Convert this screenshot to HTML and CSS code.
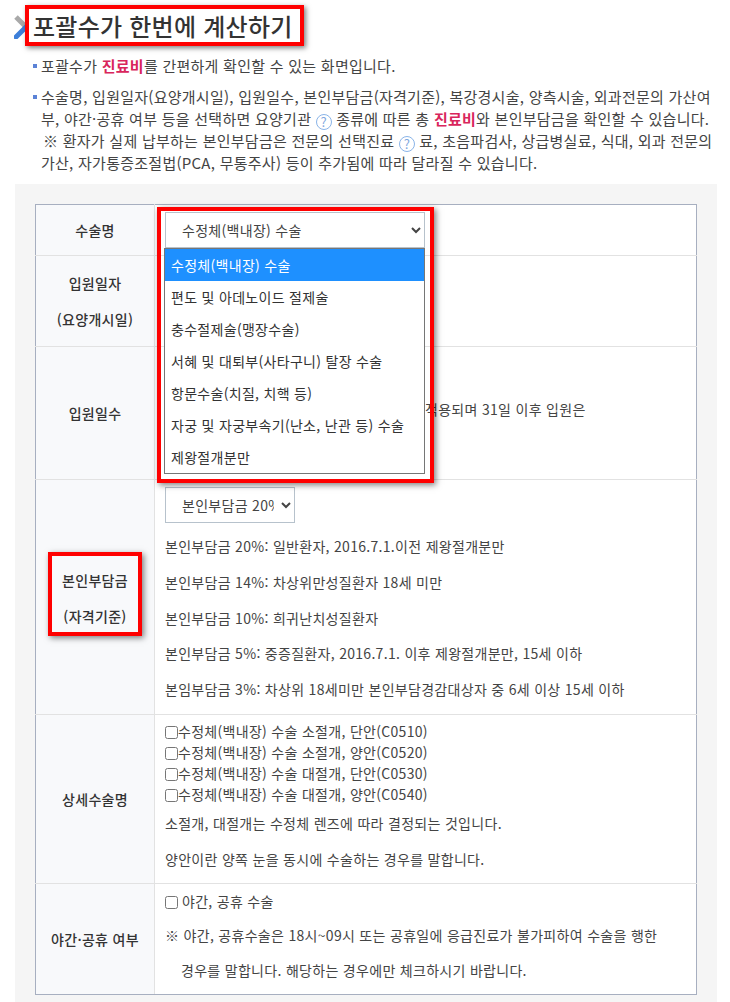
FILE: index.html
```html
<!DOCTYPE html>
<html lang="ko">
<head>
    <meta charset="utf-8">
    <title>포괄수가 한번에 계산하기</title>
    <link rel="stylesheet" href="styles.css">
</head>
<body>
    <div class="title-row">
        <svg class="title-icon" width="20" height="24" viewBox="0 0 20 24">
            <path d="M2 2 L12 12" stroke="#a9a9a9" stroke-width="5" fill="none"/>
            <path d="M12 12 L2 22" stroke="#3d7fd9" stroke-width="5" fill="none" stroke-linecap="round"/>
        </svg>
        <h1 class="title">포괄수가 한번에 계산하기</h1>
    </div>

    <ul class="intro">
        <li>포괄수가 <b class="hl">진료비</b>를 간편하게 확인할 수 있는 화면입니다.</li>
        <li>수술명, 입원일자(요양개시일), 입원일수, 본인부담금(자격기준), 복강경시술, 양측시술, 외과전문의 가산여<br>
            부, 야간·공휴 여부 등을 선택하면 요양기관 <span class="help">?</span> 종류에 따른 총 <b class="hl">진료비</b>와 본인부담금을 확인할 수 있습니다.<br>
            <span class="indent">※ 환자가 실제 납부하는 본인부담금은 전문의 선택진료 <span class="help">?</span> 료, 초음파검사, 상급병실료, 식대, 외과 전문의</span><br>
            가산, 자가통증조절법(PCA, 무통주사) 등이 추가됨에 따라 달라질 수 있습니다.</li>
    </ul>

    <div class="panel">
        <table class="calc">
            <tr class="row-name">
                <th>수술명</th>
                <td class="pick-cell">
                    <select class="pick pick-wide">
                        <option>수정체(백내장) 수술</option>
                    </select>
                    <ul class="menu">
                        <li class="on">수정체(백내장) 수술</li>
                        <li>편도 및 아데노이드 절제술</li>
                        <li>충수절제술(맹장수술)</li>
                        <li>서혜 및 대퇴부(사타구니) 탈장 수술</li>
                        <li>항문수술(치질, 치핵 등)</li>
                        <li>자궁 및 자궁부속기(난소, 난관 등) 수술</li>
                        <li>제왕절개분만</li>
                    </ul>
                    <div class="mark mark-menu"></div>
                </td>
            </tr>
            <tr class="row-date">
                <th><p>입원일자</p><p>(요양개시일)</p></th>
                <td></td>
            </tr>
            <tr class="row-days">
                <th>입원일수</th>
                <td><p class="days-note">적용되며 31일 이후 입원은</p></td>
            </tr>
            <tr>
                <th>
                    <div class="mark-wrap"><p>본인부담금</p><p>(자격기준)</p></div>
                </th>
                <td class="rate-cell">
                    <select class="pick pick-small">
                        <option>본인부담금 20%</option>
                    </select>
                    <p>본인부담금 20%: 일반환자, 2016.7.1.이전 제왕절개분만</p>
                    <p>본인부담금 14%: 차상위만성질환자 18세 미만</p>
                    <p>본인부담금 10%: 희귀난치성질환자</p>
                    <p>본인부담금 5%: 중증질환자, 2016.7.1. 이후 제왕절개분만, 15세 이하</p>
                    <p>본임부담금 3%: 차상위 18세미만 본인부담경감대상자 중 6세 이상 15세 이하</p>
                </td>
            </tr>
            <tr>
                <th>상세수술명</th>
                <td class="detail-cell">
                    <label class="check"><input type="checkbox">수정체(백내장) 수술 소절개, 단안(C0510)</label>
                    <label class="check"><input type="checkbox">수정체(백내장) 수술 소절개, 양안(C0520)</label>
                    <label class="check"><input type="checkbox">수정체(백내장) 수술 대절개, 단안(C0530)</label>
                    <label class="check"><input type="checkbox">수정체(백내장) 수술 대절개, 양안(C0540)</label>
                    <p>소절개, 대절개는 수정체 렌즈에 따라 결정되는 것입니다.</p>
                    <p>양안이란 양쪽 눈을 동시에 수술하는 경우를 말합니다.</p>
                </td>
            </tr>
            <tr>
                <th>야간·공휴 여부</th>
                <td class="night-cell">
                    <label class="check check-gap"><input type="checkbox">야간, 공휴 수술</label>
                    <p>※ 야간, 공휴수술은 18시~09시 또는 공휴일에 응급진료가 불가피하여 수술을 행한</p>
                    <p class="night-indent">경우를 말합니다. 해당하는 경우에만 체크하시기 바랍니다.</p>
                </td>
            </tr>
        </table>
    </div>
</body>
</html>
```

FILE: styles.css
```css
html, body {
    height: 1002px;
    overflow: hidden;
}

body {
    margin: 0;
    background-color: #ffffff;
    color: #444444;
    font-family: "Noto Sans CJK KR", "Noto Sans", sans-serif;
    font-size: 14px;
}

p {
    margin: 0;
}

/* Title */
.title-row {
    position: relative;
    height: 50px;
}

.title-icon {
    position: absolute;
    left: 14px;
    top: 15px;
}

.title {
    position: absolute;
    left: 25px;
    top: 5px;
    box-sizing: border-box;
    height: 41px;
    width: 279px;
    margin: 0;
    padding-left: 4px;
    border: 4px solid #ff0000;
    box-shadow: 2px 2px 5px rgba(0, 0, 0, 0.5);
    color: #333333;
    font-size: 24px;
    font-weight: 500;
    letter-spacing: 0.25px;
    line-height: 33px;
    white-space: nowrap;
}

/* Intro bullets */
.intro {
    margin: 5px 0 0 0;
    padding: 0 0 0 41px;
    list-style: none;
    font-size: 15px;
    letter-spacing: 0.26px;
    line-height: 22px;
    white-space: nowrap;
}

.intro li {
    position: relative;
    margin-bottom: 9px;
}

.intro li::before {
    content: "";
    position: absolute;
    left: -8px;
    top: 9px;
    width: 4px;
    height: 4px;
    background-color: #5b82d6;
}

.hl {
    color: #d9265c;
    font-weight: 700;
}

.help {
    display: inline-block;
    box-sizing: border-box;
    width: 16px;
    height: 16px;
    border: 1px solid #8ab4e8;
    border-radius: 50%;
    color: #7fa8e0;
    font-size: 13px;
    letter-spacing: 0;
    line-height: 14px;
    text-align: center;
    vertical-align: -2px;
}

.indent {
    padding-left: 2px;
}

/* Calculator */
.panel {
    margin: 10px 13px 0 15px;
    padding: 20px 20px 8px 20px;
    background-color: #f5f5f5;
}

.calc {
    width: 662px;
    border-collapse: collapse;
    border: 1px solid #a7afc0;
    background-color: #ffffff;
    letter-spacing: 0.3px;
}

.calc th,
.calc td {
    padding: 0 10px;
    border: 1px solid #e2e2e2;
    line-height: 36px;
}

.calc th {
    width: 98px;
    border-left: 1px solid #a7afc0;
    background-color: #f8f9fb;
    color: #333333;
    font-weight: 500;
    text-align: center;
}

.calc td {
    border-right: 1px solid #a7afc0;
}

.calc tr:first-child th,
.calc tr:first-child td {
    border-top: 1px solid #a7afc0;
}

.calc tr:last-child th,
.calc tr:last-child td {
    border-bottom: 1px solid #a7afc0;
}

.row-name {
    height: 51px;
}

.row-date {
    height: 91px;
}

.row-days {
    height: 133px;
}

.days-note {
    padding: 0 0 8px 260px;
    line-height: 22px;
    white-space: nowrap;
}

/* Selects */
.pick {
    display: block;
    box-sizing: border-box;
    height: 36px;
    padding: 0 4px 0 12px;
    border: 1px solid #b7c2cc;
    background-color: #ffffff;
    color: #444444;
    font-family: inherit;
    font-size: 14px;
    letter-spacing: inherit;
}

.pick-wide {
    width: 260px;
}

.pick-small {
    width: 130px;
}

.pick-cell {
    position: relative;
}

.menu {
    position: absolute;
    left: 9px;
    top: 43px;
    z-index: 2;
    box-sizing: border-box;
    width: 261px;
    height: 226px;
    margin: 0;
    padding: 0;
    border: 1px solid #767676;
    background-color: #ffffff;
    list-style: none;
    color: #333333;
    line-height: 32px;
}

.menu li {
    height: 32px;
    padding-left: 6px;
}

.menu .on {
    background-color: #1e90ff;
    color: #ffffff;
}

.mark {
    position: absolute;
    z-index: 3;
    box-sizing: border-box;
    border: 4px solid #ff0000;
    box-shadow: 2px 2px 6px rgba(0, 0, 0, 0.5);
    pointer-events: none;
}

.mark-menu {
    left: 2px;
    top: 2px;
    width: 277px;
    height: 276px;
}

.mark-wrap {
    box-sizing: border-box;
    width: 94px;
    height: 84px;
    margin: 0 auto 5px auto;
    padding-top: 6px;
    border: 4px solid #ff0000;
    box-shadow: 2px 2px 6px rgba(0, 0, 0, 0.5);
}

/* Cell contents */
.calc .rate-cell {
    padding-top: 7px;
    padding-bottom: 6px;
    line-height: 35.8px;
}

.rate-cell .pick {
    margin-bottom: 6px;
}

.calc .detail-cell {
    padding-top: 6px;
    padding-bottom: 6px;
}

.check {
    display: block;
    line-height: 21px;
}

.check input {
    width: 13px;
    height: 13px;
    margin: 0;
    vertical-align: -2px;
}

.check-gap {
    line-height: 34px;
}

.check-gap input {
    margin-right: 4px;
}

.calc .night-cell {
    padding-bottom: 6px;
}

.night-cell p {
    line-height: 35px;
}

.night-indent {
    padding-left: 16px;
}
```
